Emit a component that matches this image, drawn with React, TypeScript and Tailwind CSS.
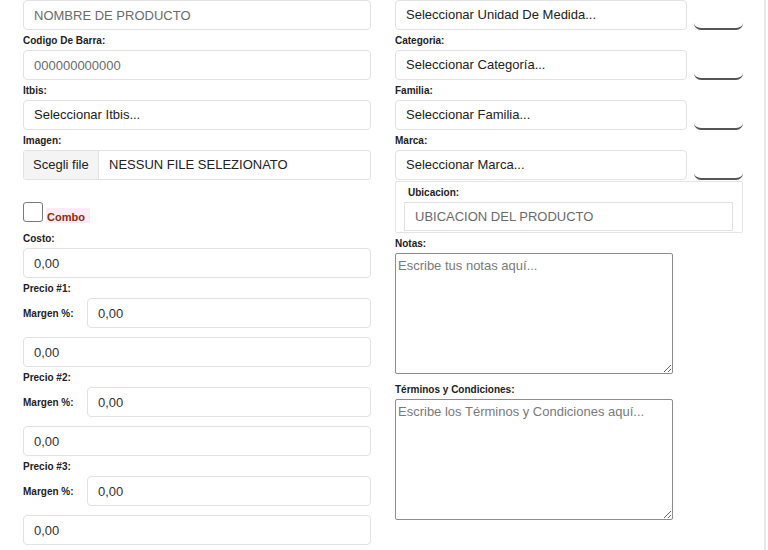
import React from "react";

const font = { fontFamily: '"Liberation Sans", Arial, sans-serif' };

const inputCls =
  "h-[30px] w-full border border-[#e2e2e2] rounded-[4px] px-[10px] text-[13px] text-[#333] placeholder:text-[#6b6b6b] outline-none bg-white";

function Label({ children, className = "" }: { children: React.ReactNode; className?: string }) {
  return (
    <div className={"h-[20px] flex items-center text-[10px] font-bold text-[#222] " + className}>
      {children}
    </div>
  );
}

function SelectBox({ text }: { text: string }) {
  return (
    <div className="h-[30px] w-full border border-[#e2e2e2] rounded-[4px] px-[10px] flex items-center text-[13px] text-[#222] bg-white">
      {text}
    </div>
  );
}

function SelectRow({ text }: { text: string }) {
  return (
    <div className="flex items-start">
      <div className="w-[292px]">
        <SelectBox text={text} />
      </div>
      <div className="ml-[7px] w-[49px] h-[30px] border-b-2 border-b-[#555] rounded-b-[7px]" />
    </div>
  );
}

function MargenRow() {
  return (
    <div className="flex items-center h-[30px]">
      <div className="w-[64px] text-[10px] font-bold text-[#222]">Margen %:</div>
      <input className={inputCls + " flex-1"} defaultValue="0,00" readOnly />
    </div>
  );
}

export default function App() {
  return (
    <div className="w-[768px] h-[550px] overflow-hidden bg-white flex" style={font}>
      <div className="ml-[23px] w-[348px] flex flex-col">
        <input className={inputCls} placeholder="NOMBRE DE PRODUCTO" readOnly />
        <Label>Codigo De Barra:</Label>
        <input className={inputCls} placeholder="000000000000" readOnly />
        <Label>Itbis:</Label>
        <SelectBox text="Seleccionar Itbis..." />
        <Label>Imagen:</Label>
        <div className="h-[30px] w-full border border-[#e2e2e2] rounded-[3px] flex items-stretch text-[13px] text-[#222] overflow-hidden">
          <div className="w-[75px] bg-[#f4f4f4] border-r border-[#e2e2e2] flex items-center pl-[9px]">
            Scegli file
          </div>
          <div className="flex items-center pl-[10px]">NESSUN FILE SELEZIONATO</div>
        </div>
        <div className="h-[48px] flex items-start pt-[22px]">
          <div className="w-[20px] h-[20px] border-[1.5px] border-[#7a7a7a] rounded-[3px] bg-white" />
          <div className="mt-[6px] ml-[3px] px-[1px] h-[15px] flex items-end bg-[#fdebf6] text-[11px] font-bold text-[#8a2d0a] leading-none pr-[5px]">
            Combo
          </div>
        </div>
        <Label>Costo:</Label>
        <input className={inputCls} defaultValue="0,00" readOnly />
        <Label>Precio #1:</Label>
        <MargenRow />
        <input className={inputCls + " mt-[9px]"} defaultValue="0,00" readOnly />
        <Label>Precio #2:</Label>
        <MargenRow />
        <input className={inputCls + " mt-[9px]"} defaultValue="0,00" readOnly />
        <Label>Precio #3:</Label>
        <MargenRow />
        <input className={inputCls + " mt-[9px]"} defaultValue="0,00" readOnly />
      </div>

      <div className="ml-[24px] w-[348px] flex flex-col">
        <SelectRow text="Seleccionar Unidad De Medida..." />
        <Label>Categoria:</Label>
        <SelectRow text="Seleccionar Categoría..." />
        <Label>Familia:</Label>
        <SelectRow text="Seleccionar Familia..." />
        <Label>Marca:</Label>
        <SelectRow text="Seleccionar Marca..." />
        <div className="mt-[1px] h-[52px] border border-[#e4e4e4] rounded-[2px] pl-[8px] pr-[9px] flex flex-col">
          <Label className="pl-[4px]">Ubicacion:</Label>
          <input
            className="h-[29px] w-full border border-[#e2e2e2] px-[10px] text-[13px] placeholder:text-[#6b6b6b] outline-none bg-white"
            placeholder="UBICACION DEL PRODUCTO"
            readOnly
          />
        </div>
        <Label>Notas:</Label>
        <textarea
          className="w-[278px] h-[121px] border border-[#8d8d8d] rounded-[2px] p-[2px] text-[13px] text-[#333] placeholder:text-[#7a7a7a] outline-none bg-white"
          style={font}
          placeholder="Escribe tus notas aquí..."
        />
        <Label className="mt-[5px]">Términos y Condiciones:</Label>
        <textarea
          className="w-[278px] h-[121px] border border-[#8d8d8d] rounded-[2px] p-[2px] text-[13px] text-[#333] placeholder:text-[#7a7a7a] outline-none bg-white"
          style={font}
          placeholder="Escribe los Términos y Condiciones aquí..."
        />
      </div>

      <div className="ml-[21px] w-[2px] h-full bg-[#e8e8e8]" />
    </div>
  );
}
